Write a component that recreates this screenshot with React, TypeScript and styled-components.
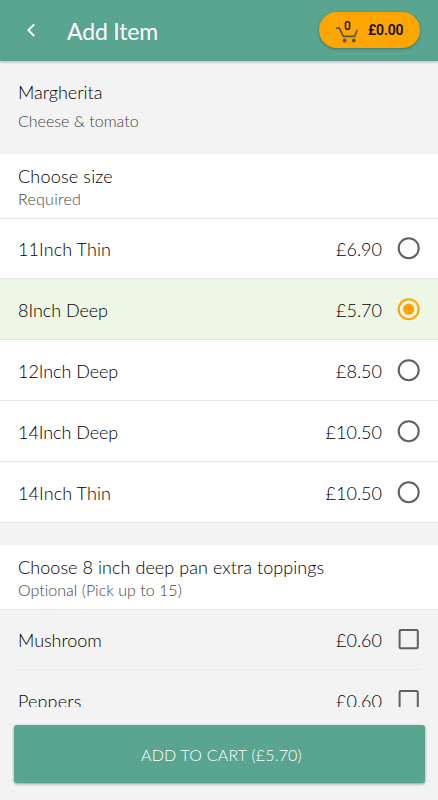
import React, { useState } from 'react';
import styled, { createGlobalStyle } from 'styled-components';

const GlobalStyle = createGlobalStyle`
  *, *::before, *::after { box-sizing: border-box; }
  body { margin: 0; background: #f3f3f3; }
`;

const Screen = styled.div`
  display: flex;
  flex-direction: column;
  width: 100%;
  height: 100vh;
  overflow: hidden;
  background: #f3f3f3;
  color: #000;
  font-family: Lato, 'Open Sans', sans-serif;
  font-weight: 300;
`;

const AppBar = styled.header`
  display: flex;
  flex: none;
  align-items: center;
  height: 61px;
  padding: 0 18px 1px 24px;
  background: #5aa58f;
  box-shadow: 0 1px 3px rgba(0, 0, 0, 0.28);
  z-index: 1;
`;

const BackButton = styled.button`
  display: flex;
  padding: 0;
  border: 0;
  background: none;
`;

const Title = styled.h1`
  flex: 1;
  margin: 1px 0 0 29px;
  color: #fff;
  font-size: 23px;
  font-weight: 400;
  line-height: 28px;
  letter-spacing: -0.15px;
`;

const CartPill = styled.button`
  display: flex;
  align-items: center;
  width: 101.5px;
  height: 36px;
  padding: 0 15px 0 17.5px;
  border: 0;
  border-radius: 18px;
  background: #ffa502;
  box-shadow: 0 1px 3px rgba(0, 0, 0, 0.3);
  color: #111;
  font: 600 14px Roboto, sans-serif;
  letter-spacing: -0.2px;
`;

const CartIcon = styled.span`
  position: relative;
  display: block;
  width: 24px;
  height: 36px;
  margin-right: 8px;
`;

const CartCount = styled.span`
  position: absolute;
  top: 8px;
  left: 8px;
  font-size: 12px;
  font-weight: 500;
  line-height: 13px;
`;

const Content = styled.main`
  flex: none;
  height: 646px;
  overflow: hidden;
`;

const ItemInfo = styled.section`
  height: 93px;
  padding: 19px 18px 0;
`;

const Heading = styled.h2<{ $track?: number }>`
  margin: 0;
  font-size: 18px;
  font-weight: 300;
  line-height: 24px;
  letter-spacing: ${(p) => p.$track ?? 0}px;
`;

const Note = styled.p<{ $gap?: number; $track?: number }>`
  margin: ${(p) => p.$gap ?? 0}px 0 0;
  color: #444;
  font-size: 16px;
  line-height: 22px;
  letter-spacing: ${(p) => p.$track ?? 0}px;
`;

const GroupHeader = styled.div`
  height: 65px;
  padding: 10px 18px 0;
  border-bottom: 1px solid #e7e7e7;
  background: #fff;
`;

const SizeRow = styled.div<{ $selected: boolean; $first: boolean }>`
  display: flex;
  align-items: center;
  height: ${(p) => (p.$first ? 60 : 61)}px;
  padding: ${(p) => (p.$first ? 0 : 1)}px 17px 0 18px;
  border-bottom: 1px solid ${(p) => (p.$selected ? '#dfe7d8' : '#e7e7e7')};
  background: ${(p) => (p.$selected ? '#eef7e6' : '#fff')};
  cursor: pointer;
`;

const ToppingRow = styled.div<{ $first: boolean }>`
  display: flex;
  align-items: center;
  height: ${(p) => (p.$first ? 60 : 61)}px;
  padding-top: ${(p) => (p.$first ? 0 : 1)}px;
  margin: 0 18px;
  border-bottom: 1px solid #e9e9e9;
  cursor: pointer;
`;

const Name = styled.span<{ $track?: number }>`
  flex: 1;
  font-size: 18px;
  line-height: 24px;
  letter-spacing: ${(p) => p.$track ?? 0}px;
`;

const Price = styled(Name)`
  flex: none;
  margin-right: 15px;
`;

const Spacer = styled.div`
  height: 22px;
`;

const Footer = styled.footer`
  padding: 18px 13.5px 0;
`;

const AddButton = styled.button`
  display: block;
  width: 100%;
  height: 58px;
  padding: 0 0 0 5px;
  border: 0;
  border-radius: 3px;
  background: #5aa58f;
  box-shadow: 0 1px 3px rgba(0, 0, 0, 0.4);
  color: #fff;
  font: 300 16px Lato, sans-serif;
  letter-spacing: 0.2px;
`;

const Radio = ({ on }: { on: boolean }) => (
  <svg width="24" height="24" viewBox="0 0 24 24" fill="none">
    <circle cx="11.7" cy="11.2" r="10" stroke={on ? '#ffa502' : '#606060'} strokeWidth="2.1" />
    {on && <circle cx="11.7" cy="11.2" r="5.6" fill="#ffa502" />}
  </svg>
);

const Checkbox = ({ on }: { on: boolean }) => (
  <svg width="23" height="24" viewBox="0 0 23 24" fill="none">
    <rect x="2.6" y="2" width="18.2" height="18.2" rx="1.2" stroke="#606060" strokeWidth="2" />
    {on && <path d="M6.5 11l4 4 7-8" stroke="#606060" strokeWidth="2" />}
  </svg>
);

const sizes = [
  { name: '11Inch Thin', price: '6.90', track: 0.08 },
  { name: '8Inch Deep', price: '5.70', track: -0.04 },
  { name: '12Inch Deep', price: '8.50', track: -0.06 },
  { name: '14Inch Deep', price: '10.50', track: -0.06 },
  { name: '14Inch Thin', price: '10.50', track: 0.08 },
];

const toppings = [
  { name: 'Mushroom', price: '0.60', track: -0.05 },
  { name: 'Peppers', price: '0.60', track: 0.15 },
];

export default function App() {
  const [size, setSize] = useState(1);
  const [picked, setPicked] = useState<number[]>([]);
  const toggle = (i: number) =>
    setPicked((p) => (p.includes(i) ? p.filter((n) => n !== i) : [...p, i]));

  return (
    <Screen>
      <GlobalStyle />
      <AppBar>
        <BackButton aria-label="Back">
          <svg width="14" height="16" viewBox="0 0 14 16" fill="none">
            <path d="M10.2 2.4L4.4 8.2l5.8 5.8" stroke="#fff" strokeWidth="2" />
          </svg>
        </BackButton>
        <Title>Add Item</Title>
        <CartPill>
          <CartIcon>
            <svg width="24" height="36" viewBox="0 0 24 36" fill="none">
              <path
                d="M.9 16.2h2.4l4.1 8.2h11.2l2.4-5.7"
                stroke="#555"
                strokeWidth="1.7"
                strokeLinecap="round"
                strokeLinejoin="round"
              />
              <circle cx="8.6" cy="28.5" r="1.9" fill="#555" />
              <circle cx="17.9" cy="28.5" r="1.9" fill="#555" />
            </svg>
            <CartCount>0</CartCount>
          </CartIcon>
          £0.00
        </CartPill>
      </AppBar>
      <Content>
        <ItemInfo>
          <Heading>Margherita</Heading>
          <Note $gap={6}>Cheese &amp; tomato</Note>
        </ItemInfo>
        <GroupHeader>
          <Heading $track={0.18}>Choose size</Heading>
          <Note $track={0.25}>Required</Note>
        </GroupHeader>
        {sizes.map((s, i) => (
          <SizeRow key={s.name} $first={i === 0} $selected={size === i} onClick={() => setSize(i)}>
            <Name $track={s.track}>{s.name}</Name>
            <Price>£{s.price}</Price>
            <Radio on={size === i} />
          </SizeRow>
        ))}
        <Spacer />
        <GroupHeader>
          <Heading $track={0.06}>Choose 8 inch deep pan extra toppings</Heading>
          <Note $track={0.02}>Optional (Pick up to 15)</Note>
        </GroupHeader>
        {toppings.map((t, i) => (
          <ToppingRow key={t.name} $first={i === 0} onClick={() => toggle(i)}>
            <Name $track={t.track}>{t.name}</Name>
            <Price>£{t.price}</Price>
            <Checkbox on={picked.includes(i)} />
          </ToppingRow>
        ))}
      </Content>
      <Footer>
        <AddButton>ADD TO CART (£{sizes[size].price})</AddButton>
      </Footer>
    </Screen>
  );
}
